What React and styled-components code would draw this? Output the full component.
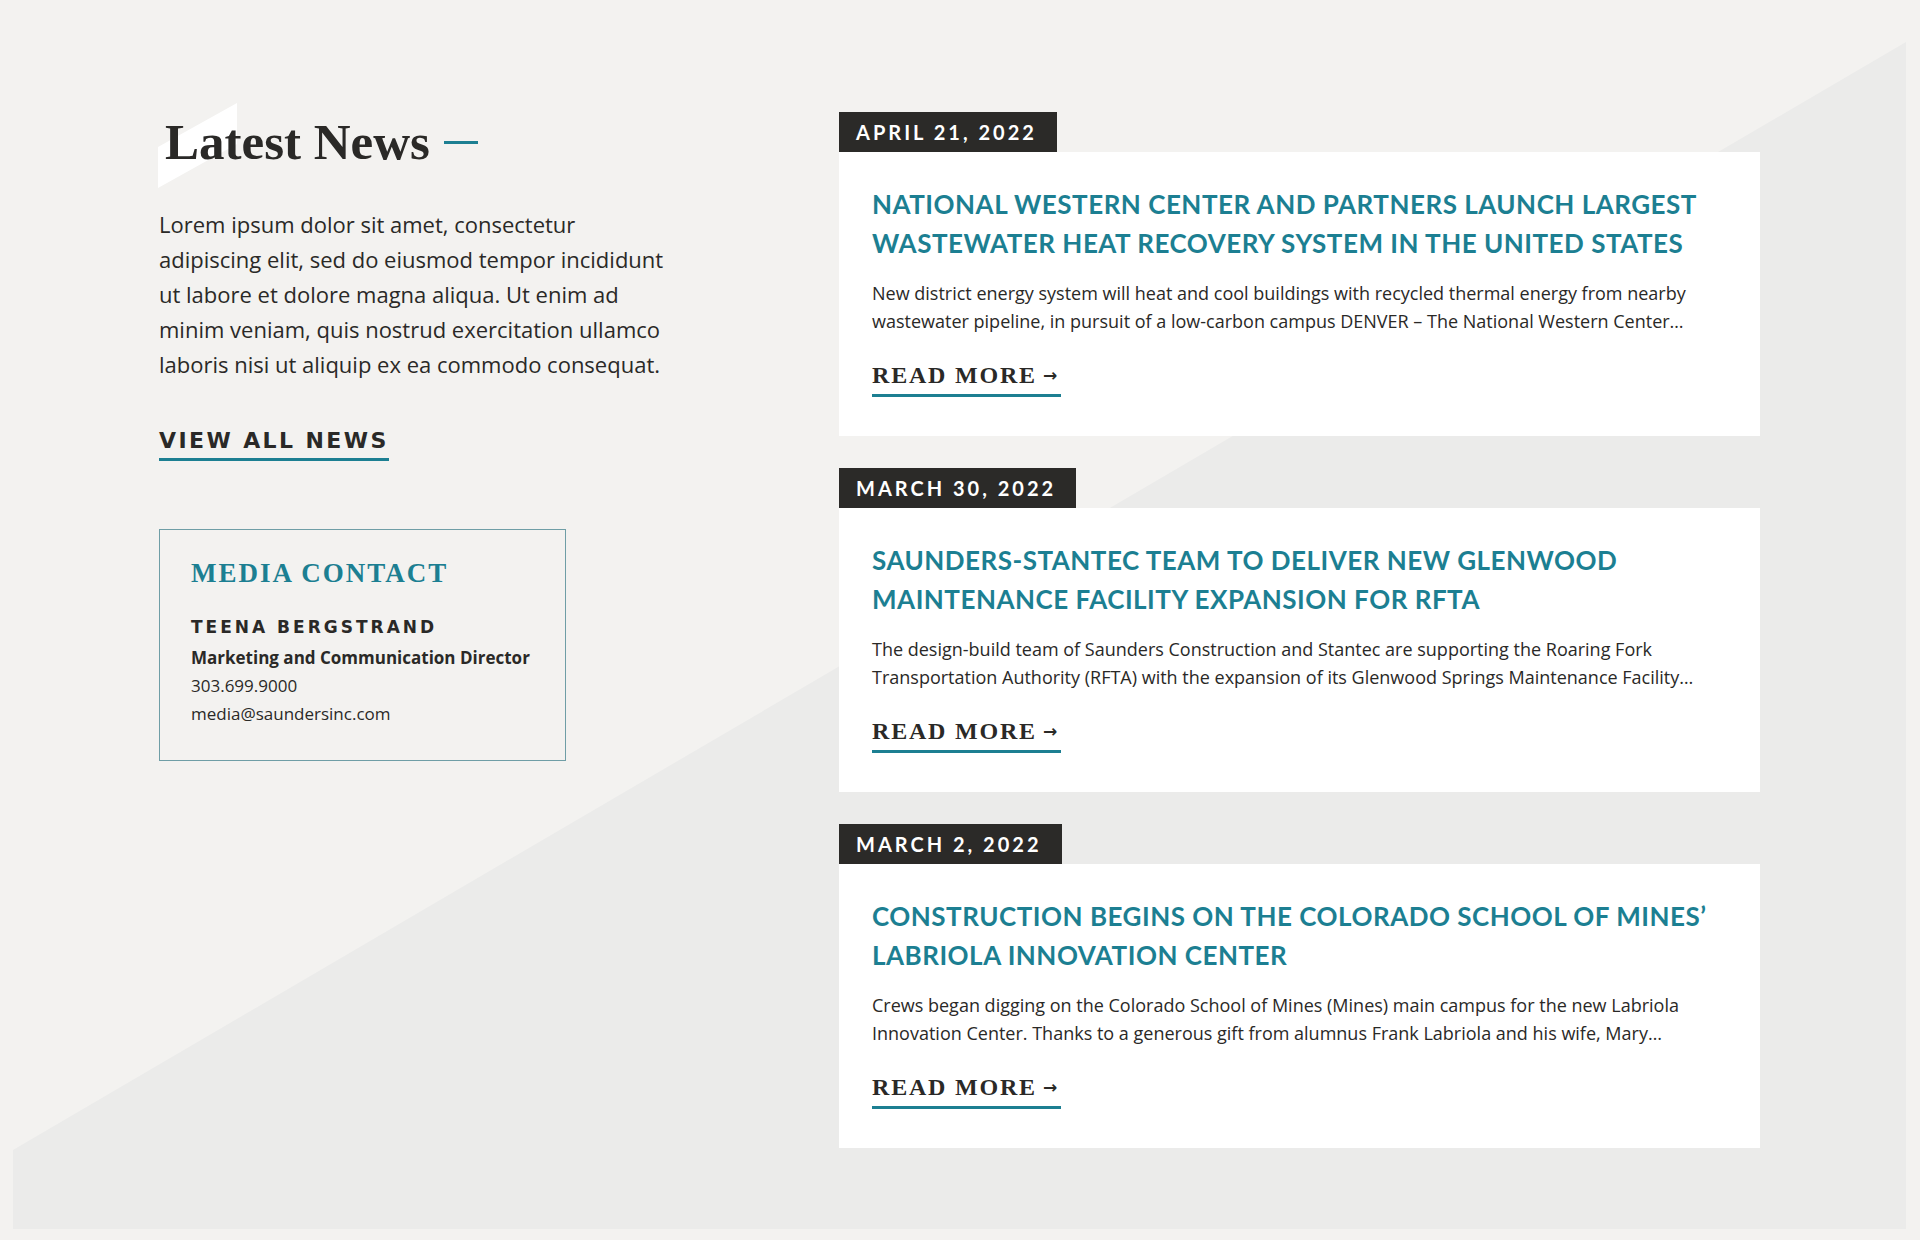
import React from 'react'
import styled, { createGlobalStyle } from 'styled-components'

const GlobalStyle = createGlobalStyle`
  html, body {
    margin: 0;
    padding: 0;
    background: #f3f2f0;
  }
  * {
    box-sizing: border-box;
  }
`

const teal = '#1c7f92'
const ink = '#2a2927'

const Page = styled.div`
  padding: 0 14px 11px 13px;
  min-height: 1240px;
`

const Section = styled.section`
  position: relative;
  min-height: 1229px;
  padding: 112px 146px 80px;
  display: grid;
  grid-template-columns: 680px 921px;
  align-items: start;

  &::before {
    content: '';
    position: absolute;
    inset: 0;
    background: #ebebea;
    clip-path: polygon(0 1150px, 100% 42px, 100% 100%, 0 100%);
    z-index: 0;
  }
`

const Intro = styled.div`
  position: relative;
  z-index: 1;
  width: 520px;
`

const Title = styled.h2`
  position: relative;
  margin: 0;
  padding-left: 6px;
  display: flex;
  align-items: center;
  height: 61px;
  font-family: 'Liberation Serif', serif;
  font-weight: 700;
  font-size: 51px;
  line-height: 61px;
  color: ${ink};

  &::before {
    content: '';
    position: absolute;
    left: -1px;
    top: -9px;
    width: 79px;
    height: 85px;
    background: #ffffff;
    clip-path: polygon(0 44px, 79px 0, 79px 41px, 0 85px);
    z-index: -1;
  }

  &::after {
    content: '';
    width: 34px;
    height: 3px;
    margin-left: 14px;
    background: ${teal};
  }
`

const Lead = styled.p`
  margin: 34px 0 0;
  max-width: 512px;
  font-family: 'Open Sans', sans-serif;
  font-size: 22px;
  line-height: 35px;
  color: ${ink};
`

const ViewAll = styled.a`
  display: inline-block;
  margin-top: 46px;
  padding-bottom: 5px;
  border-bottom: 3px solid ${teal};
  font-family: 'DejaVu Sans', sans-serif;
  font-weight: 700;
  font-size: 22px;
  letter-spacing: 2.4px;
  color: ${ink};
  text-decoration: none;
`

const ContactBox = styled.div`
  margin-top: 68px;
  width: 407px;
  padding: 28px 20px 32px 31px;
  border: 1px solid #6f9ea6;
`

const ContactTitle = styled.h3`
  margin: 0;
  font-family: 'Liberation Serif', serif;
  font-weight: 700;
  font-size: 27px;
  line-height: 31px;
  letter-spacing: 2px;
  color: ${teal};
`

const ContactName = styled.div`
  margin-top: 28px;
  font-family: 'DejaVu Sans', sans-serif;
  font-weight: 700;
  font-size: 17px;
  line-height: 20px;
  letter-spacing: 3px;
  color: ${ink};
`

const ContactLine = styled.div`
  font-family: 'Open Sans', sans-serif;
  font-size: 17px;
  line-height: 28px;
  font-weight: ${p => (p.$bold ? 700 : 400)};
  margin-top: ${p => (p.$first ? '7px' : '0')};
  color: ${ink};
`

const NewsList = styled.div`
  position: relative;
  z-index: 1;
  display: flex;
  flex-direction: column;
  gap: 32px;
`

const Article = styled.article`
  display: flex;
  flex-direction: column;
  align-items: flex-start;
`

const DateTag = styled.div`
  height: 40px;
  padding: 0 20px 0 17px;
  background: #2b2a28;
  color: #ffffff;
  font-family: Lato, sans-serif;
  font-weight: 700;
  font-size: 20px;
  line-height: 40px;
  letter-spacing: 3px;
`

const Card = styled.div`
  align-self: stretch;
  background: #ffffff;
  padding: 33px 32px 39px 33px;
`

const CardTitle = styled.h3`
  margin: 0;
  font-family: Lato, sans-serif;
  font-weight: 700;
  font-size: 26px;
  line-height: 39px;
  letter-spacing: 0.5px;
  color: ${teal};
`

const Excerpt = styled.p`
  margin: 16px 0 0;
  font-family: 'Open Sans', sans-serif;
  font-size: 18px;
  line-height: 28px;
  color: ${ink};
`

const ReadMore = styled.a`
  display: inline-flex;
  align-items: center;
  margin-top: 27px;
  padding: 0 4px 6px 0;
  border-bottom: 3px solid ${teal};
  font-family: 'Liberation Serif', serif;
  font-weight: 700;
  font-size: 24px;
  line-height: 26px;
  letter-spacing: 1.8px;
  color: ${ink};
  text-decoration: none;
`

const Arrow = styled.span`
  margin-left: 6px;
  font-family: 'DejaVu Sans', sans-serif;
  font-size: 17px;
  letter-spacing: 0;
  line-height: 1;
`

const news = [
  {
    date: 'APRIL 21, 2022',
    title:
      'NATIONAL WESTERN CENTER AND PARTNERS LAUNCH LARGEST WASTEWATER HEAT RECOVERY SYSTEM IN THE UNITED STATES',
    excerpt:
      'New district energy system will heat and cool buildings with recycled thermal energy from nearby wastewater pipeline, in pursuit of a low-carbon campus DENVER – The National Western Center…',
  },
  {
    date: 'MARCH 30, 2022',
    title:
      'SAUNDERS-STANTEC TEAM TO DELIVER NEW GLENWOOD MAINTENANCE FACILITY EXPANSION FOR RFTA',
    excerpt:
      'The design-build team of Saunders Construction and Stantec are supporting the Roaring Fork Transportation Authority (RFTA) with the expansion of its Glenwood Springs Maintenance Facility…',
  },
  {
    date: 'MARCH 2, 2022',
    title:
      'CONSTRUCTION BEGINS ON THE COLORADO SCHOOL OF MINES’ LABRIOLA INNOVATION CENTER',
    excerpt:
      'Crews began digging on the Colorado School of Mines (Mines) main campus for the new Labriola Innovation Center. Thanks to a generous gift from alumnus Frank Labriola and his wife, Mary…',
  },
]

export default function App() {
  return (
    <Page>
      <GlobalStyle />
      <Section>
        <Intro>
          <Title>Latest News</Title>
          <Lead>
            Lorem ipsum dolor sit amet, consectetur adipiscing elit, sed do
            eiusmod tempor incididunt ut labore et dolore magna aliqua. Ut enim
            ad minim veniam, quis nostrud exercitation ullamco laboris nisi ut
            aliquip ex ea commodo consequat.
          </Lead>
          <ViewAll href="#">VIEW ALL NEWS</ViewAll>
          <ContactBox>
            <ContactTitle>MEDIA CONTACT</ContactTitle>
            <ContactName>TEENA BERGSTRAND</ContactName>
            <ContactLine $bold $first>
              Marketing and Communication Director
            </ContactLine>
            <ContactLine>303.699.9000</ContactLine>
            <ContactLine>media@saundersinc.com</ContactLine>
          </ContactBox>
        </Intro>
        <NewsList>
          {news.map(n => (
            <Article key={n.date}>
              <DateTag>{n.date}</DateTag>
              <Card>
                <CardTitle>{n.title}</CardTitle>
                <Excerpt>{n.excerpt}</Excerpt>
                <ReadMore href="#">
                  READ MORE<Arrow>→</Arrow>
                </ReadMore>
              </Card>
            </Article>
          ))}
        </NewsList>
      </Section>
    </Page>
  )
}
